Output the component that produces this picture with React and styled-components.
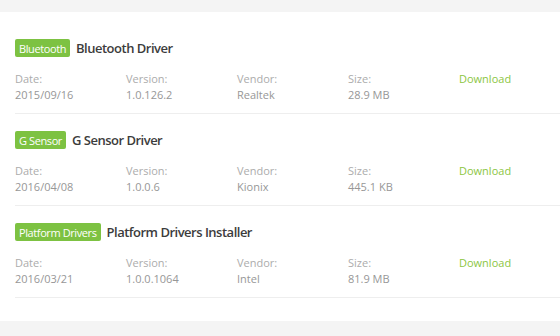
import React from 'react';
import styled, { createGlobalStyle } from 'styled-components';

const GlobalStyle = createGlobalStyle`
  body {
    margin: 0;
    background: #f4f4f4;
    font-family: "Open Sans", "Noto Sans", sans-serif;
  }
`;

const Page = styled.div`
  padding: 12px 0 0;
  height: 336px;
  box-sizing: border-box;
`;

const Panel = styled.section`
  background: #fff;
  padding: 10px 0 23px 15px;
`;

const Row = styled.div`
  padding: 17px 0 10px;
  border-bottom: 1px solid #eee;
`;

const Heading = styled.div`
  display: flex;
  align-items: center;
  gap: 6px;
  height: 18px;
`;

const Badge = styled.span`
  display: inline-flex;
  align-items: center;
  height: 18px;
  padding: 0 4px;
  border-radius: 2px;
  background: #7dc242;
  color: #fff;
  font-size: 11px;
  letter-spacing: -0.4px;
`;

const Title = styled.h3`
  margin: 0;
  font-size: 13px;
  font-weight: 600;
  letter-spacing: -0.5px;
  color: #3c3c3c;
`;

const Info = styled.div`
  display: grid;
  grid-template-columns: repeat(5, 111px);
  margin-top: 14px;
  font-size: 11px;
  line-height: 16px;
`;

const Label = styled.div`
  color: #acacac;
`;

const Value = styled.div`
  color: #979797;
`;

const Download = styled.a`
  color: #8cc63f;
  text-decoration: none;
  cursor: pointer;
`;

const drivers = [
  { tag: 'Bluetooth', name: 'Bluetooth Driver', date: '2015/09/16', version: '1.0.126.2', vendor: 'Realtek', size: '28.9 MB' },
  { tag: 'G Sensor', name: 'G Sensor Driver', date: '2016/04/08', version: '1.0.0.6', vendor: 'Kionix', size: '445.1 KB' },
  { tag: 'Platform Drivers', name: 'Platform Drivers Installer', date: '2016/03/21', version: '1.0.0.1064', vendor: 'Intel', size: '81.9 MB' },
];

export default function App() {
  return (
    <Page>
      <GlobalStyle />
      <Panel>
        {drivers.map((d) => (
          <Row key={d.name}>
            <Heading>
              <Badge>{d.tag}</Badge>
              <Title>{d.name}</Title>
            </Heading>
            <Info>
              <div>
                <Label>Date:</Label>
                <Value>{d.date}</Value>
              </div>
              <div>
                <Label>Version:</Label>
                <Value>{d.version}</Value>
              </div>
              <div>
                <Label>Vendor:</Label>
                <Value>{d.vendor}</Value>
              </div>
              <div>
                <Label>Size:</Label>
                <Value>{d.size}</Value>
              </div>
              <div>
                <Download>Download</Download>
              </div>
            </Info>
          </Row>
        ))}
      </Panel>
    </Page>
  );
}
